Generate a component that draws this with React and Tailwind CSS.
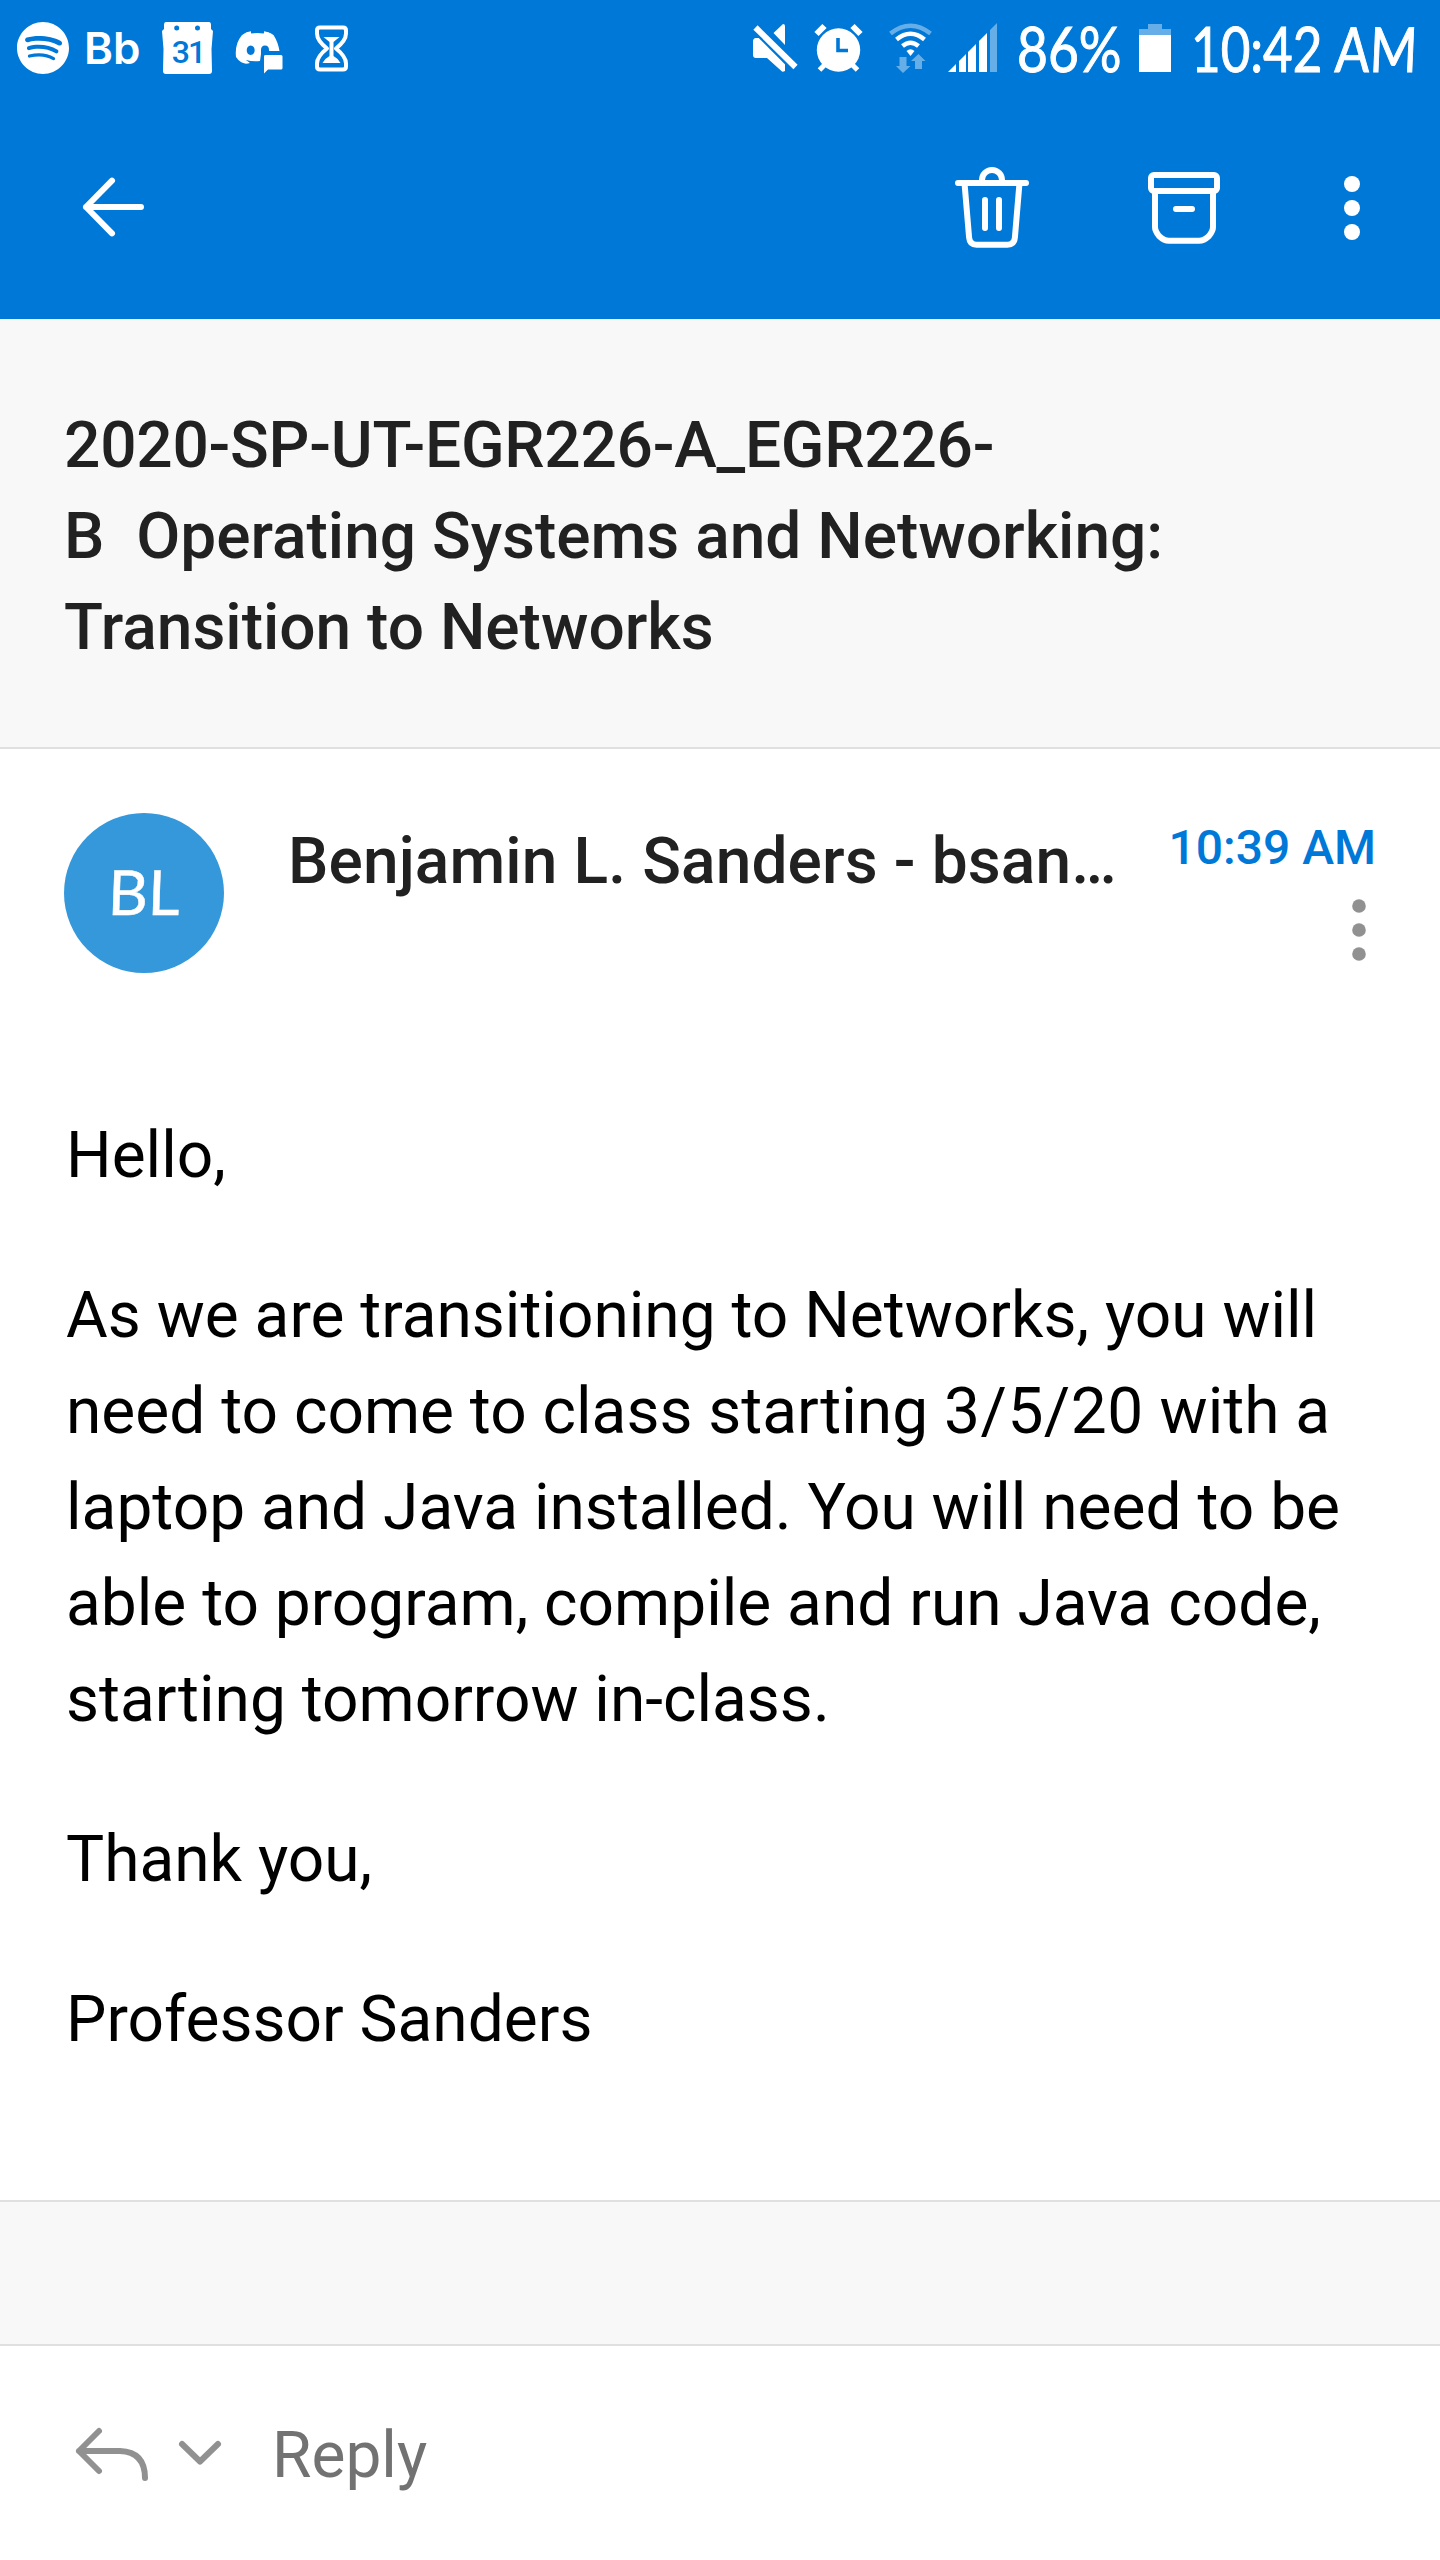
import React from "react";
import { SiSpotify } from "react-icons/si";

function Icon({ x, y, w, h, className = "", children }) {
  return (
    <svg width={w} height={h} viewBox={`${x} ${y} ${w} ${h}`} className={`block shrink-0 ${className}`} fill="currentColor">
      {children}
    </svg>
  );
}

const stroke = {
  fill: "none",
  stroke: "currentColor",
  strokeWidth: 6,
  strokeLinecap: "round",
  strokeLinejoin: "round",
};

function StatusBar() {
  return (
    <div className="flex h-24 items-center justify-between pl-[17px] pr-[24px]">
      <div className="flex items-center">
        <SiSpotify size={52} className="shrink-0" />
        <span className="ml-[15px] flex h-[60px] w-[59px] items-center whitespace-nowrap font-['Inter',sans-serif] text-[44px] font-semibold">
          Bb
        </span>
        <div className="relative ml-[17px]">
          <Icon x={160} y={18} w={56} h={60}>
            <path
              fillRule="evenodd"
              d="M166 22h43q2 0 2 3v4l2 2-1.500 18 .5 22q0 3-3 3H166q-3 0-3-3l.5-22L162 31l2-2v-4q0-3 2-3ZM176.700 25.500a2.500 2.500 0 1 0 0 5 2.500 2.500 0 1 0 0-5ZM197.500 25.500a2.500 2.500 0 1 0 0 5 2.500 2.500 0 1 0 0-5Z"
            />
          </Icon>
          <span className="absolute inset-x-0 top-[18px] text-center text-[32px] leading-[32px] font-medium tracking-[-2px] text-[#0078d8]">31</span>
        </div>
        <Icon x={233} y={18} w={52} h={60} className="ml-[17px]">
          <path
            fillRule="evenodd"
            d="M236 57q-1.500-13 6-22 6-3 8-3l1.500 1.500q6-1 12 0L265 32q5 .5 8.500 3 4.500 7 6 16H269v-1q0-4.500-4-4.500t-4 4.500v4l-1 7q-7 1-14-1l4 3q-2 .8-4 .8-6-.8-10-6.800ZM250.700 45.500c-5.300 0-5.300 9.500 0 9.500s5.300-9.500 0-9.500Z"
          />
          <path d="M243.500 35q3-2.500 7.500-3M264 32q4 .5 8 3" fill="none" stroke="currentColor" strokeWidth="1.500" />
          <path d="M265 55h16q1.500 0 1.500 1.500V68q0 1.500-1.500 1.500H268l-4 4V56.500q0-1.500 1-1.500Z" />
        </Icon>
        <Icon x={313} y={18} w={37} h={60} className="ml-[28px]">
          <path
            d="M320 27.500h23q3 0 3 3v3q0 7-10 15 10 8 10 15v3q0 3-3 3h-23q-3 0-3-3v-3q0-7 10-15-10-8-10-15v-3q0-3 3-3Z"
            fill="none"
            stroke="currentColor"
            strokeWidth="4"
            strokeLinejoin="round"
          />
          <path d="M323.500 37h16l-6 5v14q4 2 7 7h-18q3-5 7-7V42Z" />
        </Icon>
      </div>
      <div className="flex items-center">
        <Icon x={750} y={18} w={48} h={60}>
          <path d="M773.500 33 783 24q2 0 2 2v19ZM755 38h10l20 20v13q-2 1-3 .5L767 58h-11q-3 0-3-3V41q0-2 2-3Z" />
          <path d="m755.500 27 40 40" fill="none" stroke="#0078d8" strokeWidth="11" />
          <path d="m755.500 27.500 40 39.500" fill="none" stroke="currentColor" strokeWidth="6" />
        </Icon>
        <Icon x={813} y={18} w={52} h={60} className="ml-[15px]">
          <circle cx="838.500" cy="50" r="21.700" />
          <path d="m816.500 34 8-8M860.500 34l-8-8" fill="none" stroke="currentColor" strokeWidth="6" />
          <path d="m819.500 70 6-6M857.500 70l-6-6" fill="none" stroke="currentColor" strokeWidth="5" />
          <path d="M838 38v12.500h10" fill="none" stroke="#0078d8" strokeWidth="3.600" />
        </Icon>
        <Icon x={888} y={18} w={46} h={60} className="ml-[23px]">
          <path d="M890.500 33.500q20-15.500 40 0" fill="none" stroke="currentColor" strokeOpacity=".4" strokeWidth="4.500" />
          <path d="M896.500 39.500q14-11.500 28 0M902.500 46q8-6.500 16 0" fill="none" stroke="currentColor" strokeWidth="4.500" />
          <path d="M906.500 51q4-3.500 8 0l-4 5Z" />
          <path opacity=".4" d="M899.500 57h7v9h4l-7.500 7-7-7h3.500ZM918.500 54l7 7h-3.500v8h-7v-8h-4Z" />
        </Icon>
        <Icon x={946} y={18} w={53} h={60} className="ml-[12px]">
          <path d="M948 72l8-8v8ZM959 61l7-7v18h-7ZM968 52l8-8v28h-8ZM979 41l8-8v39h-8Z" />
          <path opacity=".4" d="M990 30l7-7v49h-7Z" />
        </Icon>
        <span className="ml-[18px] w-[109px] origin-left scale-x-[0.86] whitespace-nowrap font-['Lato',sans-serif] text-[62px] leading-[60px] [-webkit-text-stroke:1px_white]">86%</span>
        <Icon x={1139} y={18} w={32} h={60} className="ml-[13px]">
          <path opacity=".4" d="M1148 24h14v5h9v6h-32v-6h9Z" />
          <path d="M1139 35h32v37h-32Z" />
        </Icon>
        <span className="ml-[20px] w-[225px] origin-left scale-x-[0.825] whitespace-nowrap font-['Lato',sans-serif] text-[62px] leading-[60px] [-webkit-text-stroke:1px_white]">
          10:42 <span className="inline-block -skew-x-3">AM</span>
        </span>
      </div>
    </div>
  );
}

function Toolbar() {
  return (
    <div className="flex h-[223px] items-start pt-[66px]">
      <Icon x={80} y={162} w={70} h={90} className="ml-[80px]">
        <path d="M112 180.700 86 207l26 26.300M86 207h55" {...stroke} />
      </Icon>
      <Icon x={950} y={162} w={84} h={90} className="ml-auto">
        <path
          d="M958 183h68M982 183v-3a10 10 0 0 1 20 0v3M964.500 183l4.600 54.500q.6 7.200 7.400 7.200h31q6.800 0 7.400-7.200l4.600-54.500M985 200v28M999 200v28"
          {...stroke}
        />
      </Icon>
      <Icon x={1142} y={162} w={84} h={90} className="ml-[108px]">
        <rect x="1151" y="175" width="66" height="16" rx="3" {...stroke} />
        <path d="M1155 191v36q0 4 4 9 5 4.700 10 4.700h30q5 0 10-4.700 4-5 4-9v-36M1176 209h16" {...stroke} />
      </Icon>
      <Icon x={1340} y={162} w={24} h={90} className="ml-[114px] mr-[76px]">
        <circle cx="1352" cy="184" r="8" />
        <circle cx="1352" cy="208" r="8" />
        <circle cx="1352" cy="232" r="8" />
      </Icon>
    </div>
  );
}

export default function App() {
  return (
    <div className="flex h-[2560px] w-[1440px] flex-col overflow-hidden bg-white font-['Roboto',sans-serif] text-[64px] text-black">
      <header className="h-[319px] shrink-0 bg-[#0078d8] text-white">
        <StatusBar />
        <Toolbar />
      </header>

      <section className="h-[430px] shrink-0 border-b-2 border-[#e0e0e0] bg-[#f8f8f8] px-[64px] pt-[81px]">
        <h1 className="leading-[91px] font-medium whitespace-pre text-[#212121]">
          <span className="tracking-[-0.23px]">2020-SP-UT-EGR226-A_EGR226-</span>
          {"\nB  Operating Systems and Networking:\nTransition to Networks"}
        </h1>
      </section>

      <main className="h-[1451px] shrink-0">
        <div className="flex h-[352px] items-start pl-[64px] pr-[64px] pt-[64px]">
          <div className="flex size-[160px] shrink-0 items-center justify-center rounded-full bg-[#3498db] pb-[4px] font-['Lato',sans-serif] text-[62px] text-white">
            <span className="-skew-x-2 [-webkit-text-stroke:0.5px_white]">BL</span>
          </div>
          <h2 className="ml-[64px] w-[830px] whitespace-nowrap pt-[11px] leading-[75px] font-medium tracking-[0.12px] text-[#212121]">Benjamin L. Sanders - bsan…</h2>
          <div className="flex flex-1 flex-col items-end">
            <time className="whitespace-nowrap pt-[7px] text-[48px] leading-[56px] font-medium text-[#0078d8]">10:39 AM</time>
            <Icon x={1349} y={895} w={20} h={70} className="mt-[19px] mr-[7px] text-[#919191]">
              <circle cx="1359" cy="906" r="6.800" />
              <circle cx="1359" cy="930" r="6.800" />
              <circle cx="1359" cy="954" r="6.800" />
            </Icon>
          </div>
        </div>
        <div className="flex flex-col gap-[64px] px-[66px] pt-[7px] leading-[96px]">
          <p>Hello,</p>
          <p className="whitespace-pre">
            {"As we are transitioning to Networks, you will\nneed to come to class starting "}
            <span className="tracking-[0.5px]">3/5/20</span>
            {" with a\nlaptop and Java installed. You will need to be\nable to program, compile and run Java code,\nstarting tomorrow in-class."}
          </p>
          <p>Thank you,</p>
          <p>Professor Sanders</p>
        </div>
      </main>

      <div className="h-[146px] shrink-0 border-y-2 border-[#e0e0e0] bg-[#f8f8f8]" />

      <footer className="flex flex-1 items-start pt-[65px] text-[#919191]">
        <Icon x={70} y={2411} w={84} h={90} className="ml-[70px]">
          <path d="M99 2431l-20 20 20 20M79 2451h41q25 1 25 27" {...stroke} />
        </Icon>
        <Icon x={174} y={2411} w={52} h={90} className="ml-[20px]">
          <path d="M182 2444l18 17.500 18-17.500" {...stroke} />
        </Icon>
        <span className="ml-[46px] pt-[7px] leading-[75px] text-[#727272]">Reply</span>
      </footer>
    </div>
  );
}
